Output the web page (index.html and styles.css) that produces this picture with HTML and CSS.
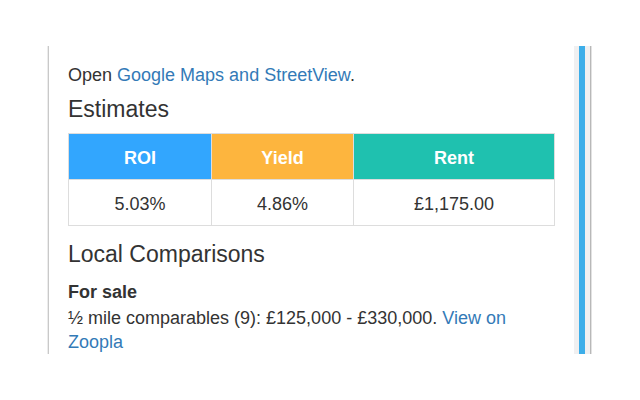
FILE: index.html
```html
<!DOCTYPE html>
<html lang="en">
<head>
<meta charset="utf-8">
<title>Property estimates</title>
<link rel="stylesheet" href="styles.css">
</head>
<body>
<div class="page">
  <div class="panel">
    <div class="content">
      <p class="open">Open <a href="#">Google Maps and StreetView</a>.</p>
      <h3>Estimates</h3>
      <table class="estimates">
        <thead>
          <tr>
            <th class="roi">ROI</th>
            <th class="yield">Yield</th>
            <th class="rent">Rent</th>
          </tr>
        </thead>
        <tbody>
          <tr>
            <td>5.03%</td>
            <td>4.86%</td>
            <td>£1,175.00</td>
          </tr>
        </tbody>
      </table>
      <h3 class="local">Local Comparisons</h3>
      <div class="sub">For sale</div>
      <p class="comp">½ mile comparables (9): £125,000 - £330,000. <a href="#">View on Zoopla</a></p>
    </div>
    <div class="gutter"><div class="thumb"></div></div>
  </div>
</div>
</body>
</html>
```

FILE: styles.css
```css
html, body {
  margin: 0;
  padding: 0;
  background: #ffffff;
}

body {
  font-family: "Liberation Sans", Arial, sans-serif;
  font-size: 18px;
  color: #333333;
}

.page {
  padding: 46px 0 0 47px;
}

.panel {
  display: flex;
  width: 543px;
  height: 308px;
  border-left: 1px solid #ececec;
}

.content {
  flex: 1;
  border-left: 1px solid #c9c9c9;
  padding: 17px 19px 0;
  overflow: hidden;
}

a {
  color: #337ab7;
  text-decoration: none;
}

p {
  margin: 0;
  line-height: 24px;
}

.open {
  margin-bottom: 9px;
}

h3 {
  margin: 0 0 11px;
  font-size: 23px;
  line-height: 26px;
  font-weight: 400;
  color: #333333;
}

.estimates {
  border-collapse: collapse;
  width: 487px;
  margin-bottom: 15px;
  table-layout: fixed;
}

.estimates th,
.estimates td {
  border: 1px solid #dddddd;
  padding: 12px 8px 8px;
  line-height: 25px;
  text-align: center;
}

.estimates th {
  color: #ffffff;
  font-weight: 700;
}

.estimates th.roi {
  width: 126px;
  background: #32a6fe;
}

.estimates th.yield {
  width: 125px;
  background: #fdb53e;
}

.estimates th.rent {
  background: #1fc1af;
}

.estimates td {
  color: #333333;
}

.local {
  margin-bottom: 13px;
}

.sub {
  font-weight: 700;
  line-height: 24px;
  margin-bottom: 2px;
}

.gutter {
  width: 17px;
  flex: none;
  padding: 0 5px;
  box-sizing: border-box;
  background: #f0f0f1;
  border-right: 1px solid #b8b8b8;
  box-shadow: 1px 0 0 #e2e2e2;
  display: flex;
  justify-content: center;
}

.thumb {
  width: 6px;
  background: #3daee9;
}
```
